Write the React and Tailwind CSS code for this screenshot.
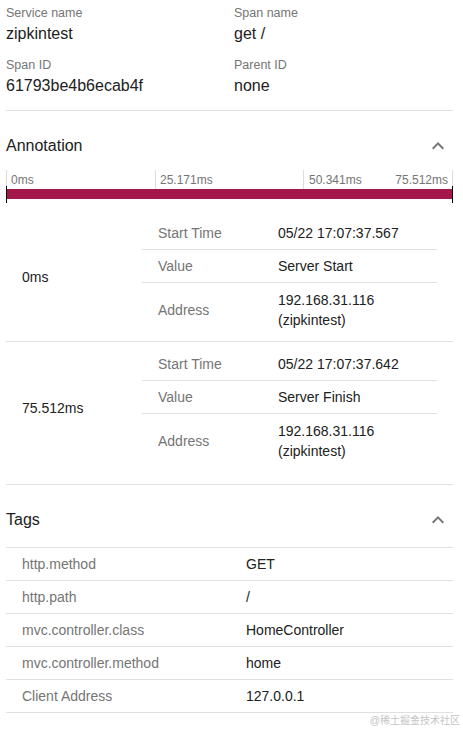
import React from 'react';

const font = { fontFamily: '"Liberation Sans", Arial, "Noto Sans CJK SC", sans-serif' };

const ExpandLess = () => (
  <svg width="24" height="24" viewBox="0 0 24 24" className="text-[#757575]" fill="currentColor">
    <path d="M12 8l-6 6 1.41 1.41L12 10.83l4.59 4.58L18 14z" />
  </svg>
);

const annotations = [
  { at: '0ms', start: '05/22 17:07:37.567', value: 'Server Start', address: ['192.168.31.116', '(zipkintest)'], pt: 'pt-[14px]', pb: 'pb-[4px]' },
  { at: '75.512ms', start: '05/22 17:07:37.642', value: 'Server Finish', address: ['192.168.31.116', '(zipkintest)'], pt: 'pt-[6px]', pb: 'pb-[16px]' },
];

const tags = [
  ['http.method', 'GET'],
  ['http.path', '/'],
  ['mvc.controller.class', 'HomeController'],
  ['mvc.controller.method', 'home'],
  ['Client Address', '127.0.0.1'],
];

const Field = ({ label, value }) => (
  <div>
    <div className="text-[12.5px] leading-[16px] text-[#757575]">{label}</div>
    <div className="mt-[3px] text-[16px] leading-[20px] text-[#212121]">{value}</div>
  </div>
);

const SectionHeader = ({ title, pt }) => (
  <div className={`flex items-center justify-between ${pt}`}>
    <span className="text-[16px] leading-[24px] text-[#212121]">{title}</span>
    <span className="mr-[3px]"><ExpandLess /></span>
  </div>
);

export default function App() {
  return (
    <div className="w-[463px] h-[729px] bg-white overflow-hidden pl-[6px] pr-[10px]" style={font}>
      {/* span info */}
      <div className="grid grid-cols-[228px_1fr] gap-y-[13px] pt-[5px] pb-[14px] border-b border-[#e0e0e0]">
        <Field label="Service name" value="zipkintest" />
        <Field label="Span name" value="get /" />
        <Field label="Span ID" value="61793be4b6ecab4f" />
        <Field label="Parent ID" value="none" />
      </div>

      <SectionHeader title="Annotation" pt="pt-[23px]" />

      {/* timeline */}
      <div className="relative mt-[12px] h-[33px]">
        <div className="absolute left-0 top-0 h-[20px] w-px bg-[#dcdcdc]" />
        <div className="absolute left-[149px] top-0 h-[22px] w-px bg-[#dcdcdc]" />
        <div className="absolute left-[297px] top-0 h-[22px] w-px bg-[#dcdcdc]" />
        <div className="absolute right-0 top-0 h-[20px] w-px bg-[#dcdcdc]" />
        <div className="flex text-[12px] leading-[14px] text-[#757575] pt-[3px]">
          <span className="w-[149px] pl-[5px]">0ms</span>
          <span className="w-[148px] pl-[5px]">25.171ms</span>
          <span className="flex-1 flex justify-between pl-[6px] pr-[5px]">
            <span>50.341ms</span>
            <span>75.512ms</span>
          </span>
        </div>
        <div className="absolute left-0 right-0 top-[19px] h-[10px] bg-[#a3174a]" />
        <div className="absolute left-0 top-[16px] h-[17px] w-px bg-black" />
        <div className="absolute right-0 top-[16px] h-[17px] w-px bg-black" />
      </div>

      {/* annotation rows */}
      {annotations.map((a) => (
        <div key={a.at} className={`flex border-b border-[#e0e0e0] ${a.pt} ${a.pb}`}>
          <div className="w-[136px] pl-[16px] flex items-center text-[14px] text-[#212121]">{a.at}</div>
          <div className="w-[295px] text-[14px] leading-[20px]">
            <div className="grid grid-cols-[136px_1fr] h-[33px] items-center border-b border-[#e0e0e0]">
              <span className="pl-[16px] text-[#757575]">Start Time</span>
              <span className="text-[#212121]">{a.start}</span>
            </div>
            <div className="grid grid-cols-[136px_1fr] h-[33px] items-center border-b border-[#e0e0e0]">
              <span className="pl-[16px] text-[#757575]">Value</span>
              <span className="text-[#212121]">{a.value}</span>
            </div>
            <div className="grid grid-cols-[136px_1fr] py-[7px] items-center">
              <span className="pl-[16px] text-[#757575]">Address</span>
              <span className="text-[#212121]">
                {a.address.map((l) => <div key={l}>{l}</div>)}
              </span>
            </div>
          </div>
        </div>
      ))}

      <SectionHeader title="Tags" pt="pt-[23px]" />

      {/* tags table */}
      <div className="mt-[15px] border-t border-[#e0e0e0] text-[14px]">
        {tags.map(([k, v]) => (
          <div key={k} className="grid grid-cols-[224px_1fr] h-[33px] items-center border-b border-[#e0e0e0]">
            <span className="pl-[16px] text-[#757575]">{k}</span>
            <span className="pl-[16px] text-[#212121]">{v}</span>
          </div>
        ))}
      </div>

      <div className="flex justify-end -mr-[7px] pt-[1px] text-[10px] leading-[14px] text-[#c4c4c4]">
        @稀土掘金技术社区
      </div>
    </div>
  );
}
